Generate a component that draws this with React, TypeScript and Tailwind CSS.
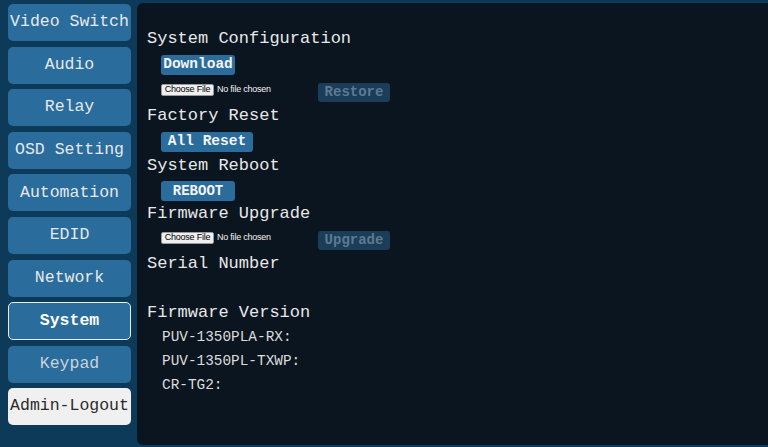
import type { ReactNode } from "react";

const MONO = "font-['Liberation_Mono','Courier_New',monospace]";

const NAV = [
  "Video Switch",
  "Audio",
  "Relay",
  "OSD Setting",
  "Automation",
  "EDID",
  "Network",
  "System",
  "Keypad",
  "Admin-Logout",
];

function NavButton({ label }: { label: string }) {
  if (label === "System") {
    return (
      <div
        className={`flex h-[38px] items-center justify-center rounded-[5px] border-[1.5px] border-[#e8eef4] bg-[#2a6c9c] text-[16.5px] font-bold text-white ${MONO}`}
      >
        {label}
      </div>
    );
  }
  if (label === "Admin-Logout") {
    return (
      <div
        className={`flex h-[37px] items-center justify-center rounded-[5px] bg-[#f0f0f0] text-[16.5px] text-[#2a2a2a] ${MONO}`}
      >
        {label}
      </div>
    );
  }
  return (
    <div
      className={`flex h-[37px] items-center justify-center rounded-[5px] bg-[#2a6c9c] text-[16.5px] ${
        label === "Keypad" ? "text-[#c9d3dc]" : "text-[#e6e9ec]"
      } ${MONO}`}
    >
      {label}
    </div>
  );
}

function Heading({ children, className = "" }: { children: ReactNode; className?: string }) {
  return (
    <div className={`h-[20px] text-[17px] leading-[20px] text-[#e8e8e8] ${MONO} ${className}`}>
      {children}
    </div>
  );
}

function ActionButton({ children, width, className = "" }: { children: ReactNode; width: string; className?: string }) {
  return (
    <div className={`ml-[14px] flex h-[20px] items-center justify-center rounded-[3px] bg-[#2a6c9c] text-[14.5px] font-bold text-[#f4f4f4] ${MONO} ${width} ${className}`}>
      {children}
    </div>
  );
}

function FileRow({ action, className = "" }: { action: string; className?: string }) {
  return (
    <div className={`flex h-[19px] items-start ${className}`}>
      <div className="ml-[14px] flex w-[157px] items-center font-['Liberation_Sans',Arial,sans-serif] text-[9px]">
        <span className="flex h-[12px] w-[53px] items-center justify-center rounded-[2px] border border-[#9a9a9a] bg-[#efefef] tracking-tight text-black">
          Choose File
        </span>
        <span className="ml-[3px] tracking-tight text-[#f2f2f2]">No file chosen</span>
      </div>
      <div className={`flex h-[19px] w-[72px] items-center justify-center rounded-[3px] bg-[#1b3d58] text-[14px] font-bold text-[#5c7a92] ${MONO}`}>
        {action}
      </div>
    </div>
  );
}

export default function App() {
  return (
    <div className="flex h-[447px] w-[768px] overflow-hidden bg-[#0e3a5a]">
      <nav className="ml-[8px] mt-[4px] flex w-[123px] shrink-0 flex-col gap-[5.6px]">
        {NAV.map((n) => (
          <NavButton key={n} label={n} />
        ))}
      </nav>

      <main className="ml-[6px] mt-[3px] h-[442px] flex-1 rounded-l-[6px] bg-[#0b1520] pl-[10px] pt-[26px]">
        <Heading>System Configuration</Heading>
        <ActionButton width="w-[74px]" className="mt-[6px]">Download</ActionButton>
        <FileRow action="Restore" className="mt-[8px]" />

        <Heading className="mt-[4px]">Factory Reset</Heading>
        <ActionButton width="w-[92px]" className="mt-[6px]">All Reset</ActionButton>

        <Heading className="mt-[4px]">System Reboot</Heading>
        <ActionButton width="w-[74px]" className="mt-[5px] text-[14px]">REBOOT</ActionButton>

        <Heading className="mt-[3px]">Firmware Upgrade</Heading>
        <FileRow action="Upgrade" className="mt-[7px]" />

        <Heading className="mt-[4px]">Serial Number</Heading>

        <Heading className="mt-[29px]">Firmware Version</Heading>
        <div className={`mt-[2px] pl-[15px] text-[14.4px] leading-[24px] text-[#dcdcdc] ${MONO}`}>
          <div>PUV-1350PLA-RX:</div>
          <div>PUV-1350PL-TXWP:</div>
          <div>CR-TG2:</div>
        </div>
      </main>
    </div>
  );
}
